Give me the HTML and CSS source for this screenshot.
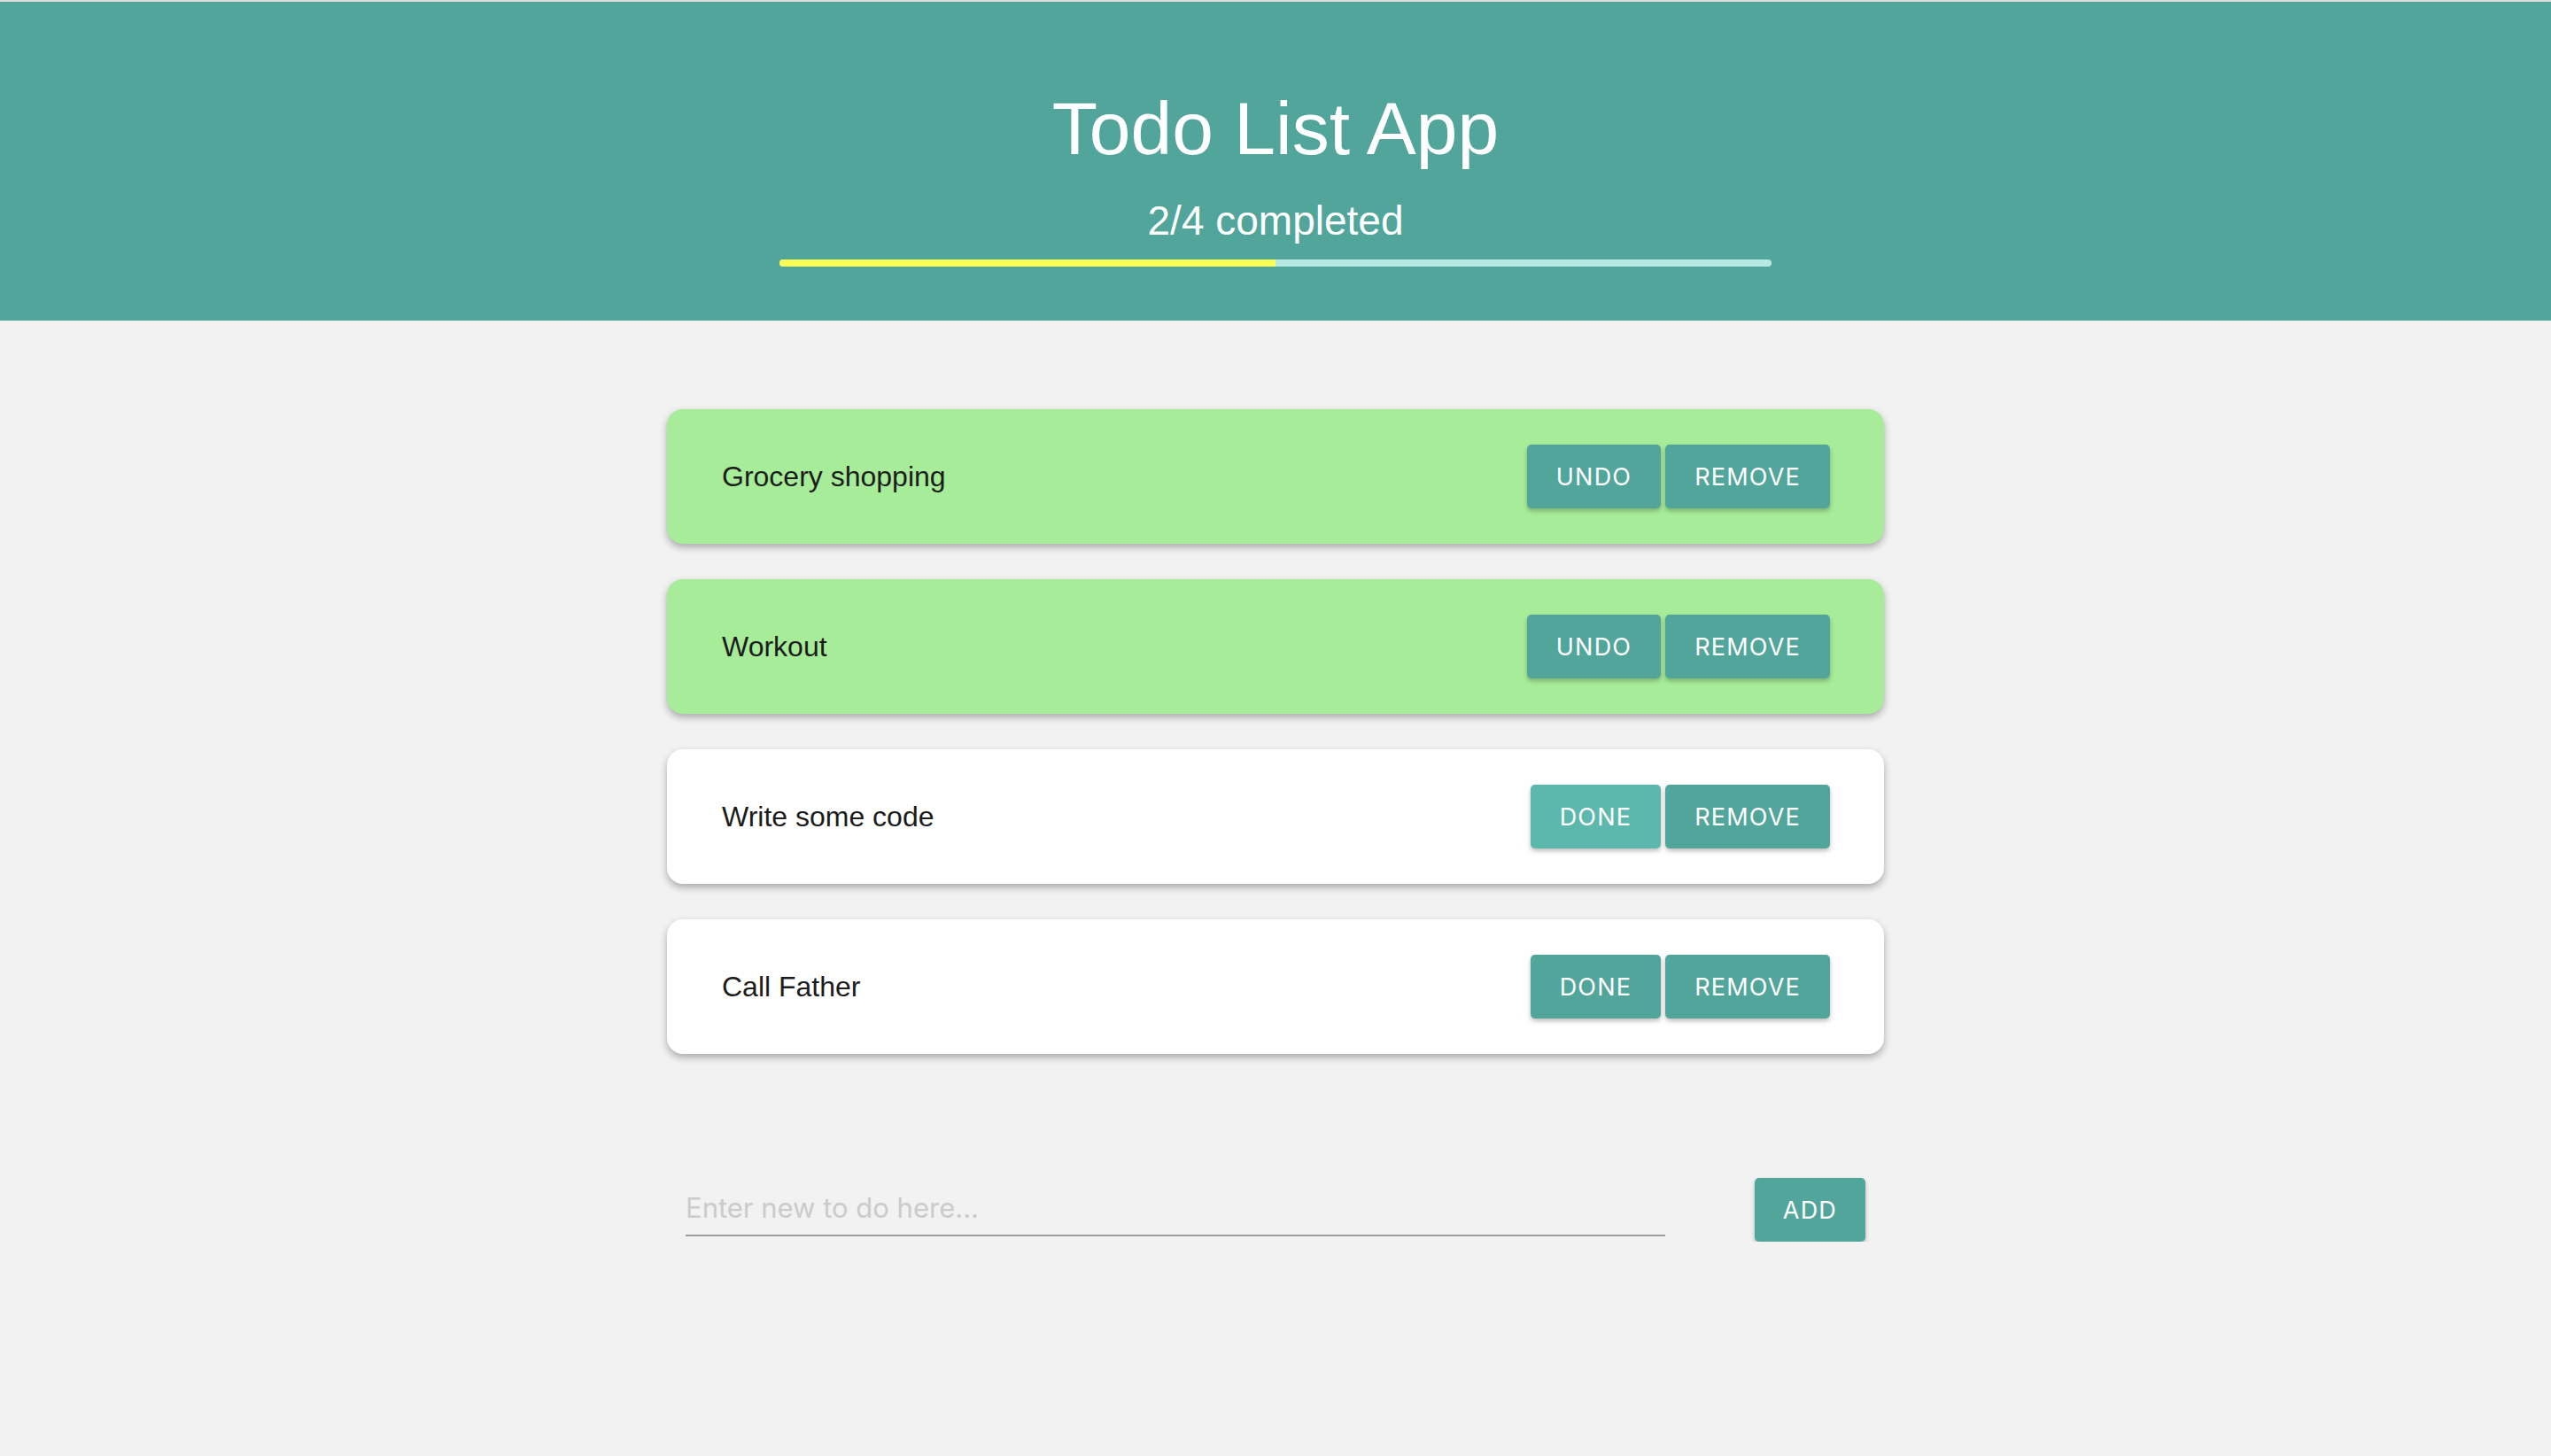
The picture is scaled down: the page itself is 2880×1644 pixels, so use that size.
FILE: index.html
```html
<!DOCTYPE html>
<html lang="en">
<head>
<meta charset="utf-8">
<title>Todo List App</title>
<link rel="stylesheet" href="styles.css">
</head>
<body>
<header class="header">
  <h1 class="title">Todo List App</h1>
  <p class="subtitle">2/4 completed</p>
  <div class="progress"><div class="progress-fill" style="width: 50%"></div></div>
</header>
<main class="list">
  <div class="card card-done">
    <span class="card-text">Grocery shopping</span>
    <div class="actions">
      <button class="btn">Undo</button>
      <button class="btn">Remove</button>
    </div>
  </div>
  <div class="card card-done">
    <span class="card-text">Workout</span>
    <div class="actions">
      <button class="btn">Undo</button>
      <button class="btn">Remove</button>
    </div>
  </div>
  <div class="card">
    <span class="card-text">Write some code</span>
    <div class="actions">
      <button class="btn btn-hover">Done</button>
      <button class="btn">Remove</button>
    </div>
  </div>
  <div class="card">
    <span class="card-text">Call Father</span>
    <div class="actions">
      <button class="btn">Done</button>
      <button class="btn">Remove</button>
    </div>
  </div>
  <div class="add-row">
    <input class="add-input" type="text" placeholder="Enter new to do here...">
    <button class="btn btn-add">Add</button>
  </div>
</main>
</body>
</html>
```

FILE: styles.css
```css
html, body {
  margin: 0;
  padding: 0;
}
body {
  background: #f2f2f2;
  font-family: "Liberation Sans", Arial, sans-serif;
}
.header {
  border-top: 2px solid #dcdcdc;
  background: #52a59b;
  height: 360px;
  display: flex;
  flex-direction: column;
  align-items: center;
}
.title {
  margin: 101px 0 0;
  font-size: 84px;
  line-height: 84px;
  font-weight: 400;
  color: #ffffff;
}
.subtitle {
  margin: 39px 0 0;
  font-size: 46px;
  line-height: 46px;
  color: #ffffff;
}
.progress {
  margin-top: 21px;
  width: 1120px;
  height: 8px;
  border-radius: 4px;
  background: #b9e9e3;
  overflow: hidden;
}
.progress-fill {
  height: 100%;
  background: #ffff55;
}
.list {
  width: 1374px;
  margin: 100px auto 0;
  display: flex;
  flex-direction: column;
  gap: 40px;
}
.card {
  height: 152px;
  box-sizing: border-box;
  padding: 0 61px 0 62px;
  display: flex;
  align-items: center;
  justify-content: space-between;
  background: #ffffff;
  border-radius: 18px;
  box-shadow: 0 4px 8px rgba(0, 0, 0, 0.3);
}
.card-done {
  background: #a7ec99;
}
.card-text {
  font-size: 32px;
  color: #1c1c1c;
}
.actions {
  display: flex;
  gap: 5px;
}
.btn {
  height: 72px;
  padding: 0 33px;
  border: none;
  border-radius: 5px;
  background: #52a59b;
  color: #ffffff;
  font-family: Inter, "Noto Sans", sans-serif;
  font-size: 27px;
  letter-spacing: 1.2px;
  text-transform: uppercase;
  box-shadow: 0 3px 5px rgba(0, 0, 0, 0.25);
  cursor: pointer;
}
.btn-hover {
  background: #5cb8ac;
}
.add-row {
  margin-top: 100px;
  padding: 0 21px;
  display: flex;
  align-items: flex-start;
  justify-content: space-between;
}
.add-input {
  width: 1106px;
  height: 63px;
  margin-top: 3px;
  box-sizing: border-box;
  padding: 0;
  border: none;
  border-bottom: 2px solid #9e9e9e;
  background: transparent;
  font-family: Inter, "Noto Sans", sans-serif;
  font-size: 31px;
  color: #333333;
  outline: none;
}
.add-input::placeholder {
  color: #cbcbcb;
}
.btn-add {
  padding: 0 32px;
}
```
